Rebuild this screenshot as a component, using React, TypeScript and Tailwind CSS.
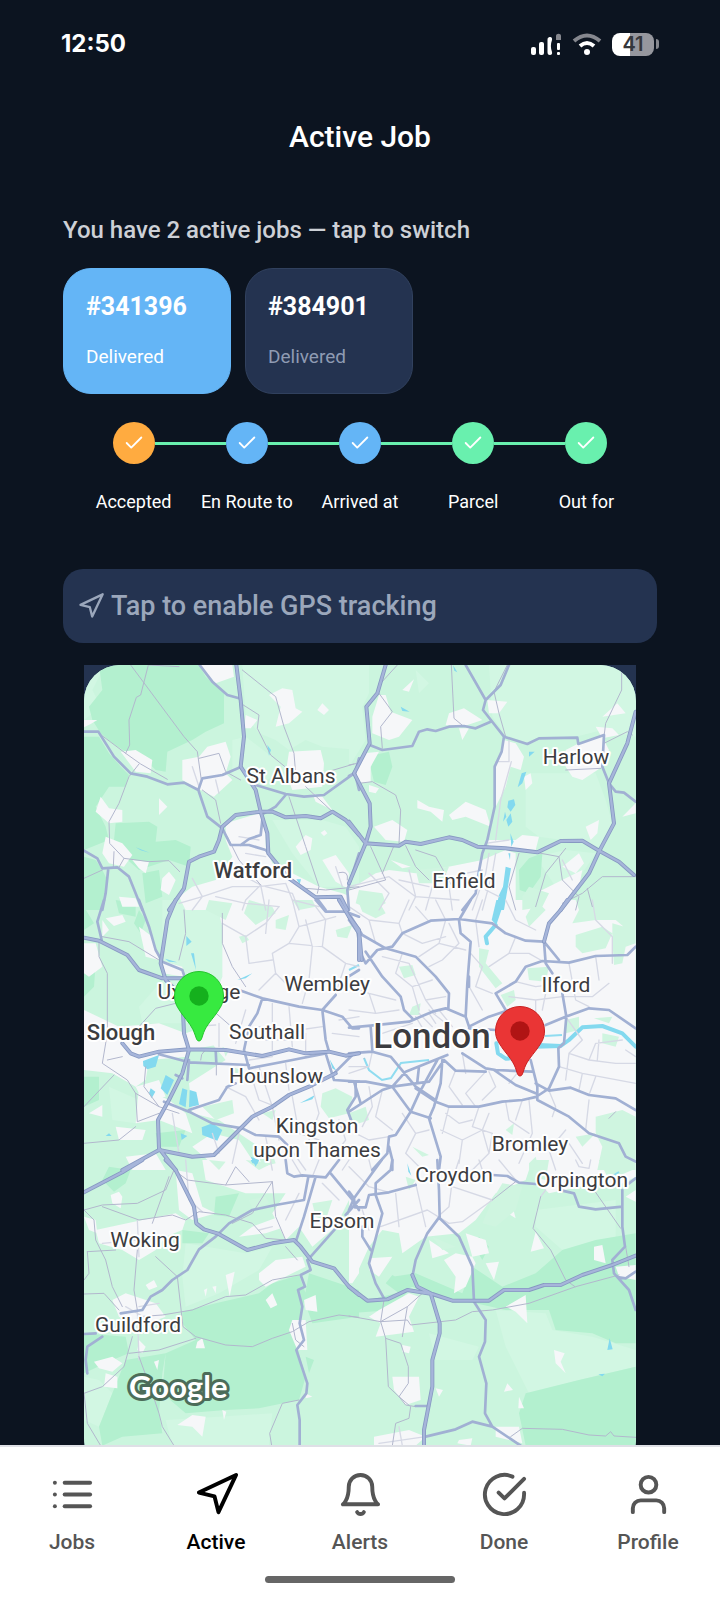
import type { ComponentType } from 'react';
import {
  FiBell,
  FiCheck,
  FiCheckCircle,
  FiList,
  FiNavigation,
  FiUser,
} from 'react-icons/fi';

const jobs = [
  { id: '#341396', status: 'Delivered', selected: true },
  { id: '#384901', status: 'Delivered', selected: false },
];

const steps = [
  { label: 'Accepted', color: 'bg-[#ffab40]' },
  { label: 'En Route to', color: 'bg-[#64b5f6]' },
  { label: 'Arrived at', color: 'bg-[#64b5f6]' },
  { label: 'Parcel', color: 'bg-[#69f0ae]' },
  { label: 'Out for', color: 'bg-[#69f0ae]' },
];

type Tab = { label: string; icon: ComponentType<{ size?: number }>; active?: boolean };

const tabs: Tab[] = [
  { label: 'Jobs', icon: FiList },
  { label: 'Active', icon: FiNavigation, active: true },
  { label: 'Alerts', icon: FiBell },
  { label: 'Done', icon: FiCheckCircle },
  { label: 'Profile', icon: FiUser },
];

// Each tile is drawn at 3x in its own coordinates
type Tile = {
  x: number;
  y: number;
  meadow?: string;
  forest?: string;
  urban?: string;
  park?: string;
  water?: string;
  river?: string;
  streets?: string;
  minor: string;
  major: string;
  motorway: string;
};

const tiles: Tile[] = [
  {
    x: 60,
    y: 640,
    meadow:
      'M550 75H900V330L790 320L740 300L690 330L650 300L600 280L560 230ZM520 300L560 290L690 390L600 430L520 410ZM640 540L790 540L860 560L900 620V740L780 740L700 640ZM75 100L130 90L100 150L125 200L75 240Z',
    forest:
      'M120 75H420L440 110L495 160V250L440 275L400 300L325 335L320 395L290 390L240 340L200 335L160 310L125 280L100 240L90 200L130 150ZM75 290H120L150 340L190 385L210 405L200 440L150 440L130 470L110 500L140 560L150 600L75 630ZM170 550L270 545L295 560L290 605L350 600L395 620L390 680L330 660L240 690L200 655L165 600ZM75 650L110 660L130 690L145 720L130 810H75ZM250 700L300 690L310 770L260 790Z',
    urban:
      'M185 335L230 330L280 360L275 400L230 395ZM370 360L420 350L445 320L500 305L515 350L500 400L520 420L465 470L425 450L370 420ZM500 550L600 520L620 560V620L640 670L700 700L780 740L850 760L900 780V810H380L360 770L400 740L470 720L520 650L500 600ZM630 165L670 145L700 150L710 205L730 215L690 250L650 260L665 200ZM775 210L790 190L810 210L795 225ZM560 225L595 240L575 265L555 265ZM690 335L785 330L795 370L790 440L700 450L680 400ZM760 460L790 470L820 510L770 485ZM125 470L150 505L190 510V545L150 550L110 515ZM300 475L325 500L300 525ZM140 590L190 610L220 645L195 680L150 670L130 640ZM710 620L740 585L760 595L755 630L725 645ZM790 660L830 645L870 700L865 745L830 725ZM310 715L330 695L350 720L330 765L305 750ZM420 75H520L525 110L470 130L440 100ZM785 578L797 570L805 580L795 588ZM75 240L115 240L95 252L75 262ZM220 660L270 665L260 700L240 685ZM180 770L230 775L240 800L190 800Z',
    water: 'M230 622L272 638L245 631ZM625 315L636 330L630 347ZM712 718L726 718L722 733Z',
    minor:
      'M215 75L375 290L415 335L427 420M268 75L245 165L232 172L210 240L212 315L200 340M120 280L200 340L245 372L325 418M240 372L210 410L180 490L150 545L152 610L195 655L270 665L330 662L362 695M165 635L163 680M195 655L180 682M75 715L130 690M550 90L600 130L650 170L675 260L705 340L710 400M545 190L600 225L595 265L635 345L690 390M690 470L740 620L780 740L775 760M740 440L820 515M790 400L885 372M420 355L480 340L500 395L545 420M430 450L470 480L485 550M505 590L540 660L605 735M740 745L800 750L900 740M840 698Q870 690 865 720M270 75L360 80',
    streets:
      'M360 790L430 770L520 740L600 740L680 730M605 735L620 810M400 715L430 770L400 810M540 700L605 735L560 780L550 810M620 740L700 760L720 810M540 590L600 600M560 640L620 650M680 730L700 780L780 800M470 770L560 790L660 800M830 680L850 740M400 380L420 440M470 420L480 460',
    major:
      'M75 275L118 275L165 350L215 400L265 410L325 433L375 428L418 450L445 530L490 565L515 615L570 615L620 630L660 680M422 75L460 125L505 165L540 175M418 450L430 415L490 405L540 383M590 435L680 462L735 470L795 465L885 400M680 465L650 500L615 520M610 540L605 585L570 597L545 615M75 632L115 655L130 685L175 682L210 710L250 810M148 685L140 760L130 810M900 355L888 400L900 450M900 640L865 750L870 810M770 770L800 810',
    motorway:
      'M532 75L545 180L555 290L545 380L590 450L605 515L625 580L628 640L690 715L770 772L845 770L865 810M330 810L375 745L390 665L420 650L465 635L480 600L490 560L530 525L605 515L640 515L680 532L740 528L785 535L820 515L860 540L900 585',
  },
  {
    x: 350,
    y: 640,
    meadow:
      'M420 75H860V290L760 270L680 290L570 290L535 310L470 285L430 230ZM0 75H60V160L40 200L50 300L0 380ZM530 400L740 400L770 480L790 550L750 620L640 600L570 590L530 560ZM200 90L240 130L210 160ZM560 650L650 630L740 640L700 700L620 740Z',
    forest: 'M75 345L120 335L130 380L110 435L75 425L65 385ZM510 690L540 655L580 640L575 710L540 760L512 750Z',
    urban:
      'M90 165L110 165L125 215L190 240L150 290L120 300L70 280L70 230ZM45 340L90 335L65 380L65 425L30 430L20 400ZM300 220L345 205L400 240L340 260L290 255ZM415 180L475 185L450 220L420 220ZM330 265L360 265L340 300ZM465 300L500 310L525 350L515 390L485 380L470 440L440 500V380ZM300 525L350 485L410 510L425 560L350 530L310 540ZM205 480L240 500L285 510L280 545L245 515L205 505ZM75 560L130 540L175 570L165 605L110 600ZM415 600L500 600L520 585L570 590L560 630L420 620ZM160 150L195 118L180 155ZM650 330L690 310L760 290L780 330L760 380L700 420L670 410L650 380ZM740 260L790 265L810 285L760 295ZM805 190L830 220L760 230ZM710 560L750 540L745 580L725 600ZM860 490V520L820 530ZM525 410L545 400L550 430L530 450ZM0 750L80 700L120 690L200 700L250 690L400 660L470 630L500 640V810H0ZM640 680L690 640L705 670L680 700ZM620 730L700 690L690 740L660 790L580 810H540L560 760ZM60 435L90 445L80 460L60 455ZM125 660L185 680L160 685Z',
    park: 'M30 750L100 760L110 790L70 810L20 790ZM200 690L300 680L280 730L210 730ZM540 740L600 760L580 800L520 810V770Z',
    water:
      'M155 200L182 215L160 213ZM312 75L325 97L316 92ZM540 335L557 335L540 350ZM518 400L532 395L520 430L506 442ZM478 482L495 478L499 495L485 515L475 502ZM485 520L490 545L478 560L472 540ZM468 515L472 530L462 545ZM484 580L494 605L487 620ZM478 640L484 640L483 660ZM470 680L486 685L465 810H440L450 765L462 740Z',
    minor:
      'M307 75L315 235L345 260M475 75L435 155L450 220L470 290M818 90V150L770 250L765 290M145 75L95 130M90 160L130 215L95 260L100 325M30 430L70 425L140 465L155 510L150 610M765 310L835 275L850 285M65 620L110 720L0 750M135 617L100 700M170 617L200 680L240 720M200 630L260 650L310 740M510 640L480 740L500 810M650 625L590 700L560 800M560 637L630 650L640 720L690 770L680 810M860 710L760 710L700 760L640 790M715 745L730 800M650 390L755 385M0 375L25 370',
    streets:
      'M480 300V365L440 365M487 365L455 480L440 600M420 640L410 700L370 810M440 640L430 700L400 810M0 740L120 710L200 770L330 780M60 700L120 760L90 810M180 690L200 770L180 810M330 740L350 700L400 690M300 740L310 810M150 720L240 740M250 740L230 810M410 750L450 770M410 610L480 600M640 660L670 720',
    major:
      'M350 75L410 180L402 210L465 290L458 335L437 380V500L415 600L400 640L385 720L380 760L340 810M480 75L455 135L410 180M62 315L100 330L190 318L210 275L235 268L260 273L300 260L345 258L380 265L425 245M465 290L535 312L570 295L685 293L688 312L765 285L760 380L780 430L800 455L825 458L860 485M0 408L15 400',
    motorway:
      'M110 75L85 160L52 200L62 310L15 400L62 490L65 560L50 610L0 730M0 545L50 610L150 617L170 605L215 612L300 592L340 600L385 620L470 625L565 637L635 603L700 602L750 632L810 665L855 705M860 215L835 310L780 430L795 550L750 635L720 700L635 810',
  },
  {
    x: 60,
    y: 900,
    meadow: 'M310 0L470 0L490 80V230L450 330L400 370L250 370L240 320L310 240L370 200L310 180ZM150 560L240 600L230 670L160 660Z',
    forest:
      'M75 530L120 530V600L75 620ZM290 700L380 690L360 740H300ZM75 160L110 190L105 260L75 290ZM170 0L230 10L230 50L180 40ZM75 20L105 70L75 90ZM240 30L260 60L245 100L225 70Z',
    urban:
      'M470 0H900V810H570L600 740L480 660L400 640L390 550L500 480L450 420L450 330L490 230V80ZM75 330L180 380L300 370L380 400L385 470L270 480L260 540L230 560L160 520L75 510ZM140 55L190 45L200 65L165 78ZM240 80L280 110L300 180L260 170ZM75 130L110 130L130 200L90 230L75 220ZM300 180L370 200L375 230L310 220ZM170 680L260 690L250 720L180 720ZM90 640L130 615L130 650ZM240 560L330 600L380 640L400 700L300 660L230 670ZM400 740L460 700L540 720L600 810H480ZM230 560L300 540L320 590L250 600ZM380 400L470 370L500 430L390 450ZM130 60L150 90L130 110ZM200 770L290 760L320 810H220Z',
    park: 'M570 0L640 20L650 40L590 75L555 40ZM450 0L520 10L500 60L440 30ZM790 580L830 565L880 590L870 640L810 655L785 620ZM830 90L880 75L865 115L835 110ZM430 620L520 600L525 640L470 660ZM650 60L690 45L680 90L650 85ZM540 110L560 105L570 120L550 130ZM610 640L650 630L640 660ZM520 500L545 510L530 530ZM700 0L760 0L770 20L720 30ZM600 770L640 760L650 790L610 800ZM490 440L510 450L500 470Z',
    water:
      'M252 483L300 465L290 500L265 508L253 498ZM320 525L345 540L325 585L305 565ZM370 565L385 570L380 622L360 612ZM392 570L412 576L420 615L390 622ZM428 682L460 670L490 690L475 722L430 705ZM275 565L289 575L278 595L270 580ZM382 108L398 125L382 138ZM396 160L405 160L411 210ZM318 176L355 187L330 185ZM722 610L768 585L760 598ZM365 700L385 708L368 720ZM812 478L832 512L820 505ZM140 708H158L150 700ZM575 770L600 780L590 800ZM535 240L580 220L560 235Z',
    minor:
      'M120 122V170L145 220V400L130 490L205 540L230 580L300 620L360 640M75 620L165 525M130 110L210 125L300 180M375 30L380 100L360 180M350 310L290 325L240 380M230 580L235 665L300 640M75 730L180 720L230 680M260 500L255 560L300 620M460 330L540 400M490 40L490 130L520 200L560 260M472 480V525M425 480Q425 440 470 450M145 480L190 470',
    streets:
      'M490 70L560 110L620 70L660 20M700 0L720 80L690 130L640 160L650 220L690 260M690 130L790 140L800 60L770 20M790 140L860 190L900 200M740 60L760 140L750 240L730 310M650 220L600 270M560 330L530 430M640 310L640 450M690 320L700 440M740 400L740 460M600 380L720 390L790 380M620 420L700 420M570 505L600 600L650 620M600 500L640 620M680 490L690 570M500 560L560 590L600 660M640 620L660 720M700 590L720 700L780 720M760 560L780 640L750 720M840 660L860 720L830 760M480 370L480 440M400 380L470 375M630 0L620 100M560 110L570 190L640 180M720 80L830 50M860 190L830 280M840 360L900 350M820 400L900 410M570 480L640 470M540 700L520 790M620 710L640 810M690 740L740 810M340 640L360 760M460 700L480 760',
    major:
      'M240 0L270 80L290 150L310 185L370 210L380 240M135 0L115 65L128 120M540 270L610 295L720 320L790 330L850 350L880 385H900M610 295L595 340L570 380L555 450L570 505L700 480L800 460M300 463L390 487L570 495M470 450L472 490M390 480L385 540M315 605L390 635L460 670L550 685L590 705L660 710L690 740M390 630L480 600L505 560L530 550M830 285L790 330L800 420L810 455M800 460L825 540L900 545M770 0L800 35L860 35L900 50M890 550V590L865 630L880 670M880 465L825 520M860 235L900 210M370 535L350 525',
    motorway:
      'M350 0L325 60L305 190L320 240L370 290L375 400L390 450L370 520L330 600L297 660L300 745L350 810M75 113L120 122L205 165L240 210L310 235L380 235M190 430L215 460L240 470L300 455L390 448L500 450L610 468L690 448L740 460L810 455L860 467L900 460M190 810L300 750L400 770L465 765L540 690L580 650L640 620L690 585L750 560L830 520M840 0L900 100V180',
  },
  {
    x: 350,
    y: 900,
    urban: 'M0 0H860V810H0Z',
    park: 'M680 0H860V110L800 60L740 60L670 70L690 30ZM680 105L760 80L790 100L770 145L700 160L680 140ZM790 70L860 90V130L830 140L820 190L795 195L790 120ZM740 650L820 630L860 650V810H745L760 740L740 700ZM150 200L190 195L200 225L165 235ZM390 145L420 150L410 190L460 250L440 265L390 200ZM190 320L215 310L210 345L180 345ZM535 205L600 200L590 245L540 240ZM455 285L495 270L500 300L475 320ZM560 0L590 30L540 80L530 50ZM30 10L90 5L110 40L80 55L40 35ZM470 690L495 670L490 705ZM650 360L690 350V390L650 400ZM735 355L790 350L780 370ZM760 400L810 410L800 440L760 430ZM680 710L740 700L700 740ZM0 640L50 620L60 660L0 680ZM540 790L560 770L570 810H540ZM190 740L240 765L220 770Z',
    water: 'M442 0H467L442 75L428 60Z',
    river:
      'M570 435L635 438L660 420L700 382L760 378L820 400L860 440M560 440L635 438M440 75L410 110L414 130M442 430L447 460L470 476L500 474',
    minor: 'M780 655L800 635M45 475L46 476',
    streets:
      'M0 20L60 60L150 70L180 0M60 60L80 130M150 70L160 100L220 130L290 110M200 20L240 65M260 0L290 60L270 130L210 170M300 70L330 130L280 180L240 200M270 130L350 150M160 160L140 220L190 260L250 240M190 260L210 330M100 170L180 190L230 300L290 290M230 300L260 340M0 260L60 280L140 300M60 280L80 340L150 330M0 330L80 340M100 400L190 370M240 340L260 370M200 350L230 400M210 340L250 380M240 330L290 370M270 330L310 380M400 0L380 60L390 140M470 0L500 60L560 90M500 110L480 160L420 200M480 160L540 160L580 183M365 160L400 200L380 260L430 280M355 250L400 330M500 245L560 260L640 250M560 300L640 290L730 290L780 250M660 190L680 300L720 320M740 170L750 240M600 230L580 330M480 290L560 300L560 370M650 350L700 420L660 460L720 480L740 430L820 420M720 480L800 490L860 490M750 420L745 480M630 500L700 520L860 550M660 460L650 540M700 520L690 570M740 530L720 585M720 600L710 690M600 572L620 620L610 650M470 605L480 660L540 700M390 620L370 680L430 700M340 460L350 520M410 515L350 580L380 620M420 515L440 560L400 600M320 510L300 560L340 615M60 560L70 620L40 680M100 570L80 650L130 690M0 500L60 500M70 455L60 500L0 520M20 700L60 720L120 710M160 640L200 700L240 690M200 700L170 760L220 810M275 690L340 720L400 690L420 640M340 720L330 790M290 640L330 670L370 660M400 690L420 760L370 810M430 700L420 760M540 600L550 700L510 790M520 740L600 750L650 690M600 750L620 810M660 730L700 790M480 550L520 500M520 600L500 660M300 620L280 700M240 400L230 440M730 0L740 60L790 110V190M830 450L860 470',
    major:
      'M0 60L25 95L35 160L50 190L85 150L130 140L160 100L245 62L330 57L430 70L470 100L530 122L585 125M0 40L40 105L110 145L200 170L260 230L300 280L298 325M365 0L330 60L335 100L365 125L355 250L350 350M50 155L100 230L155 290L165 330L190 355M0 383L65 377L180 365L250 335L290 325L350 350L360 380M360 380L420 350L480 330M360 385L440 390M470 330L440 280L500 245L530 200L580 183L660 188L740 168L835 165L860 140M585 125L590 190L610 220M585 125L630 180M640 280L652 350L645 430L628 445L630 500L600 565L570 585M590 375L650 350L720 325L780 330L860 385M340 460L410 505L440 510L550 515M435 510L500 555L560 580M565 600L660 650L720 700L810 730L830 770L860 785M545 480L565 560V600M560 550L600 572L665 563L720 585L800 595L860 630M565 590L520 600L460 605L390 620L300 620L260 605L200 565M0 460L70 455L125 470L150 500L200 560L260 600M0 545L50 545L130 560L240 545L285 480L320 512L410 515M280 480L275 550L255 620L240 655L275 770L270 810M130 560L185 635L245 655M0 635L100 570L130 560M185 635L210 580L265 480M185 635L140 705L120 710L115 760L70 810M130 560L170 515L295 465M15 545L35 610M120 740L130 780L130 810M65 380L70 450M205 545L210 500M360 230V260',
    motorway: 'M585 125L600 70L635 30L655 0M0 50L30 90L38 180',
  },
  {
    x: 60,
    y: 1160,
    meadow: 'M380 250L560 280L640 260L600 330L480 400L380 440L370 350ZM320 780L480 770L640 760L630 857H340ZM75 650L120 660L160 700L120 800L75 780Z',
    forest:
      'M370 455L470 430L600 400L640 370L720 345L740 400L720 500L715 560L740 650L720 720L600 745L500 750L380 760L310 700L320 580L410 540L370 490ZM750 340L900 390V470L760 490L735 420ZM200 600L320 580L310 640L300 760L310 820L190 830L130 857L120 800L160 700ZM75 520L200 530L210 580L160 600L75 640ZM470 110L540 100L510 170L465 165ZM370 210L450 220L430 250L370 250ZM150 20L215 30L200 70L165 95L130 60ZM740 590L765 600L750 640Z',
    urban:
      'M430 0H900V60L830 200L760 260L720 200L680 240L640 160L680 100L560 100L440 60ZM110 210L250 180L350 160L380 180L370 210L320 230L290 270L240 300L190 270L120 250ZM350 30L400 40L430 140L470 160L400 180L360 150ZM600 340L650 300L730 290L740 320L700 340L620 380L600 360ZM160 420L200 400L290 430L320 470L240 500L180 470ZM500 345L527 335L512 410ZM105 605L160 590L190 610L160 635L120 625ZM620 420L640 400L655 435L635 445ZM735 420L770 405L775 455L740 450ZM700 480L740 480L745 570L715 570L690 510ZM355 795L400 765L440 770L430 830L400 800ZM415 545L430 535L438 565L410 565ZM490 750L502 755L495 780ZM285 605L300 600L295 630ZM155 105L180 95L190 110L185 145L160 130ZM140 640L175 650V685L135 680ZM875 300L900 230V340L880 370ZM540 230L580 200L660 170L680 200L620 220ZM75 170L110 180L115 220L90 210ZM260 375L285 360L295 380L270 390ZM435 390L445 385L440 410ZM460 380L472 378L470 400ZM740 700L760 710L740 715ZM240 540L260 560L250 580L235 570Z',
    park: 'M760 130L820 120L800 180L770 170ZM570 120L620 110L630 130L580 145ZM560 0L640 10L600 30ZM450 0L500 5L480 30Z',
    water: 'M575 0H600L595 12L580 10Z',
    minor:
      'M75 150L130 135L235 130L320 90L345 30M75 150L105 180L110 240L140 300L160 380L190 440M280 190L330 50M130 140L240 180L340 165L380 180L420 155L500 165L580 190L620 235L680 240M345 30L385 60L500 75L530 20L570 65M500 75L640 65L650 170L680 240M235 270L225 390L235 450M240 590L280 700L300 760L310 800L345 857M85 275L170 270M85 275L90 340L75 360M290 290L355 350L372 500L410 530L500 555L580 560L640 535L700 515L750 485L840 465L900 472M75 402L135 400L180 450M240 470L310 465L400 450L500 410L560 405L640 360L720 345M210 580L300 570L410 535M75 700L130 680L195 620L220 530M75 700L85 790L125 857M720 720L670 730L632 820L638 857M640 65L580 160L520 190M680 260L715 300M700 490L710 540L735 560',
    streets: 'M235 450L240 600M200 440L270 480M240 440L300 430M700 0L730 50M780 0L760 50M380 0L390 120L430 155M850 30L870 0M130 250L235 240M235 180L240 290M720 100L680 180M790 70L840 120M600 210L640 200',
    major:
      'M75 97L190 37L250 0M748 50L735 120L650 135L580 150L510 190L470 230L420 268L385 330L340 360L310 390L275 410L250 450L185 460M770 50L735 170L712 240M680 0L685 40L705 50L730 46L800 52L840 0M815 40L885 125L900 150M755 290L830 205M860 165L900 120M745 300L755 330L725 345L738 380L717 390L730 440L722 490L735 540L712 570L745 670L742 700L715 735L722 780V857M75 522L110 520M130 530L85 560L80 600L85 640',
    motorway: 'M320 0L350 30L405 140L412 190L435 208L475 220L565 270L640 250L705 240L725 260L760 305L825 325L870 380L900 405M75 97L190 37L250 0',
  },
  {
    x: 350,
    y: 1160,
    meadow: 'M440 450L590 460L610 510L730 530L860 570V620L690 660L540 700L470 560ZM240 520L390 560L370 600L260 600ZM560 150L800 120L800 230L640 270L560 200Z',
    forest:
      'M130 350L200 340L340 400L370 320L460 380L560 340L640 270L740 240L860 220V550L800 550L730 520L620 510L600 450L470 450L380 430L250 410ZM530 700L690 660L860 620V857H530L510 760ZM0 390L60 420L180 390L130 450L0 460ZM370 250L390 230L420 260L400 300ZM110 370L130 345L190 380L150 400Z',
    urban:
      'M0 0H550L530 60L440 100L380 180L330 220L230 230L160 280L150 220L100 210L60 260L10 370H0ZM550 0H860V50L800 80L740 70L600 100L560 60ZM285 300L320 280L370 290L380 310L350 380L315 400L320 350ZM450 110L480 100L500 175L460 150ZM545 275L560 215L585 265ZM410 310L450 305L435 360ZM60 295L130 290L90 350L60 330ZM735 260L760 255L770 310L735 300ZM350 220L410 240L420 280L370 290ZM90 450L180 400L210 410L180 470L195 515L80 530L95 490L60 470ZM470 440L530 405L535 490L500 455ZM615 570L647 580L635 605L650 640L620 610ZM130 650L210 650L215 720L170 735L135 690ZM475 670L492 690L465 695ZM510 710L525 745L508 745ZM260 685L282 690L270 710ZM75 830L180 810L230 830L200 857H75ZM440 800L510 800L520 850L440 830ZM330 840L370 835L365 857L325 850ZM800 320L860 315V360L810 350ZM160 555L185 560L180 580L160 575ZM830 110L860 90V125ZM240 240L300 280L250 295Z',
    park: 'M250 230L320 260L280 270ZM560 0L600 0L590 60L550 50ZM750 0H830L850 30L780 60ZM170 50L200 60L180 90ZM460 70L520 80L500 150L440 200L400 190L430 120Z',
    water: 'M775 570L782 535L791 568ZM748 643L768 641L760 649ZM175 10L187 47L178 35Z',
    minor:
      'M0 468L95 485L175 480L185 495L320 480L370 455L430 450L540 430L680 380L810 345M575 110L552 205L605 270L650 360L678 380M95 485L110 535L118 680L150 710L185 740L180 775L140 790L130 857M110 535L155 550L178 620V670L150 710M175 440L160 530M95 485L175 440L220 400M105 420L95 485M485 830L520 805L640 808L720 825L770 828L785 815L795 828L860 832M735 90L815 205M430 120L500 65M830 260L840 320M150 710L170 735L200 740',
    streets:
      'M95 200L235 150L300 190L340 185L430 120M200 70L230 200M310 60L300 140L272 165M0 20L60 80L120 97M140 100L150 200M310 80L430 120M390 0L400 30M450 0L500 60M680 0L690 20L720 25L725 0M590 90L575 110M40 150L60 210M90 850L230 830M150 800L160 857M60 0L70 40M330 0L310 60',
    major:
      'M265 0L270 90L272 170L235 220L200 300L190 350M272 175L330 230L370 320L375 425L410 480L408 545L390 590L412 670L408 760L430 800L515 857M98 0L15 115L18 142L50 142L60 105L120 97L200 75M130 0L125 30L80 70V105L100 160L60 310L80 370L105 415M40 200V230L65 270M430 45L475 48L510 68L560 72M640 92L675 100L690 140L740 148L820 140M820 90V200L828 260L790 300L795 340L840 390L860 450M230 830L320 808L370 785L430 800M200 738L240 738M810 352L830 355L860 335M0 95L15 115L0 150M840 70L860 55',
    motorway:
      'M0 380L55 422L115 418L175 390L250 402L310 422L420 422L465 390L540 390L585 375L635 375L700 345L790 315L860 287M190 345L205 380L245 400L272 490V520L250 600V680L225 810V857',
  },
];

const places = [
  { name: 'St Albans', x: 292, y: 783 },
  { name: 'Harlow', x: 577, y: 764 },
  { name: 'Enfield', x: 465, y: 888 },
  { name: 'Uxbridge', x: 200, y: 999 },
  { name: 'Wembley', x: 328, y: 991 },
  { name: 'Ilford', x: 567, y: 992 },
  { name: 'Southall', x: 268, y: 1039 },
  { name: 'Hounslow', x: 277, y: 1083 },
  { name: 'Kingston', x: 318, y: 1133 },
  { name: 'upon Thames', x: 318, y: 1157 },
  { name: 'Bromley', x: 531, y: 1151 },
  { name: 'Croydon', x: 455, y: 1182 },
  { name: 'Orpington', x: 583, y: 1187 },
  { name: 'Epsom', x: 343, y: 1228 },
  { name: 'Woking', x: 146, y: 1247 },
  { name: 'Guildford', x: 139, y: 1332 },
];

const towns = [
  { name: 'Watford', x: 254, y: 878 },
  { name: 'Slough', x: 122, y: 1040 },
];

function Layer({ name, fill, stroke, width }: {
  name: Exclude<keyof Tile, 'x' | 'y'>;
  fill?: string;
  stroke?: string;
  width?: number;
}) {
  return (
    <>
      {tiles.map((tile) => (
        <path
          key={`${tile.x}-${tile.y}`}
          transform={`translate(${tile.x} ${tile.y}) scale(0.33333)`}
          d={tile[name]}
          fill={fill ?? 'none'}
          stroke={stroke}
          strokeWidth={width}
          strokeLinejoin="round"
          strokeLinecap="round"
        />
      ))}
    </>
  );
}

function Pin({ x, y, fill, edge, dot }: { x: number; y: number; fill: string; edge: string; dot: string }) {
  return (
    <g transform={`translate(${x} ${y})`}>
      <path
        d="M0 45C-2 45-2.500 43-3.500 40C-6 31-11 26-17 18C-21 12-24.500 8-24.500 0A24.500 24.500 0 1 1 24.500 0C24.500 8 21 12 17 18C11 26 6 31 3.500 40C2.500 43 2 45 0 45Z"
        fill={fill}
        stroke={edge}
      />
      <circle r="9.700" fill={dot} />
    </g>
  );
}

function JobMap() {
  return (
    <svg
      viewBox="85 665 552 810"
      preserveAspectRatio="xMidYMin slice"
      className="block w-full rounded-[36px]"
      role="img"
      aria-label="Route map of London"
    >
      <rect x="85" y="665" width="552" height="810" fill="#cbf5de" />
      <Layer name="meadow" fill="#d2f7e3" />
      <Layer name="forest" fill="#b3f0cf" />
      <Layer name="urban" fill="#f6f7f9" />
      <Layer name="park" fill="#cff5e0" />
      <Layer name="water" fill="#83d9ef" />
      <Layer name="river" stroke="#83d9ef" width={12} />
      <path
        d="M365 1058L370 1070L383 1080L392 1078L402 1063L430 1060M546 1036L563 1035M350 970L360 965M610 1178L620 1172"
        fill="none"
        stroke="#8fdcf0"
        strokeWidth="2"
      />
      <Layer name="streets" stroke="#d6d9e5" width={4} />
      <Layer name="minor" stroke="#b2b7cd" width={3} />
      <Layer name="major" stroke="#a1b0d3" width={8} />
      <Layer name="motorway" stroke="#8799c2" width={12} />
      <Layer name="motorway" stroke="#a6b5da" width={7} />

      <g
        fill="#3c3c40"
        stroke="#ffffff"
        strokeWidth="4"
        strokeLinejoin="round"
        textAnchor="middle"
        className="text-[21px] [paint-order:stroke]"
      >
        {places.map((p) => (
          <text key={p.name} x={p.x} y={p.y}>{p.name}</text>
        ))}
        {towns.map((p) => (
          <text key={p.name} x={p.x} y={p.y} className="text-[22px] font-medium">{p.name}</text>
        ))}
        <text x="433" y="1048" className="text-[35px] font-medium">London</text>
      </g>

      <Pin x={200} y={996} fill="#37ea40" edge="#22c52b" dot="#15b01d" />
      <Pin x={521} y={1031} fill="#ea3535" edge="#c92222" dot="#b01414" />

      <text
        x="130"
        y="1398"
        fill="#ffffff"
        stroke="#4c6c59"
        strokeWidth="6"
        strokeLinejoin="round"
        className="font-['Lato',sans-serif] text-[31px] font-bold [paint-order:stroke]"
      >
        Google
      </text>
    </svg>
  );
}

function StatusBar() {
  return (
    <div className="flex h-[88px] items-center justify-between pr-[61px] pl-[61px]">
      <span className="font-['Inter',sans-serif] text-2xl font-bold">12:50</span>
      <div className="flex items-center gap-[10px]">
        <svg width="32" height="24" viewBox="0 0 32 24" fill="#ffffff" aria-label="Signal">
          <rect x="1" y="15" width="5" height="8" rx="2" />
          <rect x="9" y="10" width="5" height="13" rx="2" />
          <path d="M19.500 5C21.500 4.500 22.500 6 22 8C20.500 12 20.500 16 22 20C22.500 22 21.500 23 20 23C18 23 17.500 22 17.500 20V8C17.500 6 18 5.500 19.500 5Z" />
          <path d="M26 4C26 1 31 1 31 4V8H26Z" fill="#85878e" />
          <rect x="27" y="11" width="3" height="7" rx="1" />
          <rect x="27" y="20" width="3" height="3" rx="1" />
        </svg>
        <svg width="30" height="24" viewBox="0 0 30 24" fill="none" strokeWidth="4" aria-label="Wi-Fi">
          <path d="M2 9Q15-2 28 9" stroke="#85878e" />
          <path d="M8 14Q15 8 22 14" stroke="#ffffff" />
          <circle cx="15" cy="20" r="3" fill="#ffffff" />
        </svg>
        <div className="flex items-center gap-[2px]">
          <span className="flex h-[23px] w-[42px] items-center justify-center rounded-lg bg-[linear-gradient(90deg,#fff_42%,#96979e_42%)] font-['Inter',sans-serif] text-xl font-semibold text-[#35363b]">
            41
          </span>
          <span className="h-[10px] w-[3px] rounded-r bg-[#85878e]" />
        </div>
      </div>
    </div>
  );
}

export default function App() {
  return (
    <div className="flex h-screen flex-col bg-[#0c1420] font-['Roboto',sans-serif] text-white">
      <StatusBar />

      <header className="flex h-24 items-center justify-center">
        <h1 className="text-[30px] font-medium">Active Job</h1>
      </header>

      <main className="min-h-0 flex-1 overflow-hidden px-[63px] pt-[30px]">
        <h2 className="text-2xl font-medium text-[#cdd0d6]">
          You have 2 active jobs — tap to switch
        </h2>

        <div className="mt-[22px] flex gap-[14px]">
          {jobs.map((job) => (
            <button
              key={job.id}
              type="button"
              className={
                job.selected
                  ? 'h-[126px] w-[168px] rounded-[28px] border border-[#64b5f6] bg-[#64b5f6] px-[22px] text-left text-white'
                  : 'h-[126px] w-[168px] rounded-[28px] border border-[#31415e] bg-[#243350] px-[22px] text-left text-[#8f9bb3]'
              }
            >
              <span className="block text-[25px] leading-8 font-bold text-white">{job.id}</span>
              <span className="mt-5 block text-[19px] leading-7">{job.status}</span>
            </button>
          ))}
        </div>

        <ol className="mx-[14px] mt-7 grid grid-cols-5">
          {steps.map((step, i) => (
            <li key={step.label} className="flex flex-col items-center">
              <div className="flex w-full items-center">
                <span className={i === 0 ? 'h-[3px] flex-1' : 'h-[3px] flex-1 bg-[#69f0ae]'} />
                <span className={`flex size-[42px] items-center justify-center rounded-full ${step.color}`}>
                  <FiCheck size={22} />
                </span>
                <span
                  className={i === steps.length - 1 ? 'h-[3px] flex-1' : 'h-[3px] flex-1 bg-[#69f0ae]'}
                />
              </div>
              <span className="mt-6 text-lg whitespace-nowrap">{step.label}</span>
            </li>
          ))}
        </ol>

        <button
          type="button"
          className="mt-[53px] flex h-[74px] w-full items-center gap-[6px] rounded-[20px] bg-[#243350] px-[14px] text-[27px] font-medium text-[#9ba7bb]"
        >
          <FiNavigation size={28} />
          Tap to enable GPS tracking
        </button>

        <div className="mx-[21px] mt-[22px] bg-[#243350]">
          <JobMap />
        </div>
      </main>

      <nav className="shrink-0 border-t-2 border-[#dfe0e6] bg-white pt-6 pb-[17px]">
        <ul className="grid grid-cols-5">
          {tabs.map(({ label, icon: Icon, active }) => (
            <li key={label}>
              <a
                href={`#${label.toLowerCase()}`}
                aria-current={active ? 'page' : undefined}
                className={
                  active
                    ? 'flex flex-col items-center gap-[10px] text-[21px] leading-7 font-medium text-black'
                    : 'flex flex-col items-center gap-[10px] text-[21px] leading-7 font-medium text-[#555555]'
                }
              >
                <Icon size={47} />
                {label}
              </a>
            </li>
          ))}
        </ul>
        <div className="mx-auto mt-5 h-[7px] w-[190px] rounded-full bg-[#666666]" />
      </nav>
    </div>
  );
}
